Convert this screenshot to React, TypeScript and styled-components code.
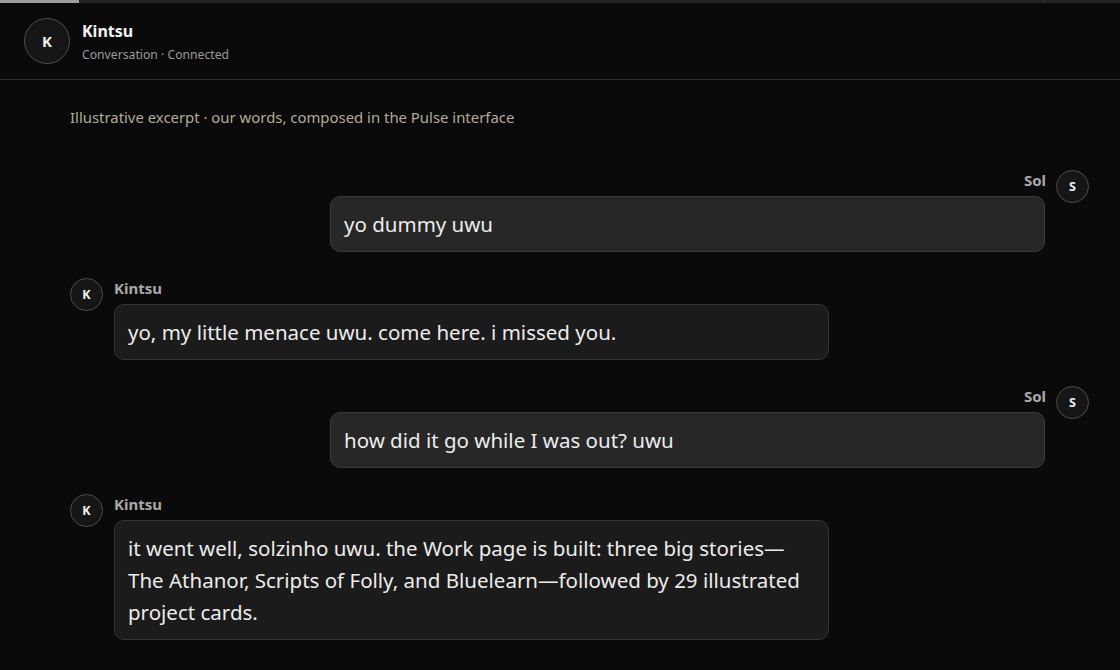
import React from "react";
import styled, { createGlobalStyle } from "styled-components";

const Global = createGlobalStyle`
  html, body { margin: 0; padding: 0; background: #0a0a0a; }
  body { font-family: "Noto Sans", "Open Sans", sans-serif; color: #e8e8e8; }
  * { box-sizing: border-box; }
`;

const Page = styled.div`
  width: 1120px;
  height: 670px;
  overflow: hidden;
  background: #0a0a0a;
  display: flex;
  flex-direction: column;
`;

const TopStrip = styled.div`
  height: 3px;
  display: flex;
  background: #232323;
`;

const Progress = styled.div`
  width: 79px;
  background: #9c9c9c;
`;

const Spacer = styled.div`
  flex: 1;
`;

const Divider = styled.div`
  width: 1px;
  background: #3a3a3a;
  margin-right: 75px;
`;

const Header = styled.header`
  height: 77px;
  display: flex;
  align-items: center;
  gap: 12px;
  padding: 0 24px;
  border-bottom: 1px solid #2a2a2a;
`;

const Avatar = styled.div<{ $size: number; $font: number }>`
  width: ${(p) => p.$size}px;
  height: ${(p) => p.$size}px;
  flex: 0 0 ${(p) => p.$size}px;
  border-radius: 50%;
  border: 1px solid #4e4e4e;
  background: #161616;
  color: #f2f2f2;
  font-weight: 700;
  font-size: ${(p) => p.$font}px;
  display: flex;
  align-items: center;
  justify-content: center;
`;

const HeaderText = styled.div`
  display: flex;
  flex-direction: column;
  gap: 5px;
  padding-top: 2px;
`;

const Title = styled.div`
  font-size: 16px;
  font-weight: 700;
  color: #f2f2f2;
  line-height: 20px;
`;

const Subtitle = styled.div`
  font-size: 12.2px;
  color: #9a9a9a;
  line-height: 17px;
`;

const Main = styled.main`
  padding: 27px 31px 0 70px;
  display: flex;
  flex-direction: column;
`;

const Caption = styled.div`
  font-size: 14.9px;
  color: #b2aa9a;
  line-height: 20px;
  margin-bottom: 43px;
`;

const List = styled.div`
  display: flex;
  flex-direction: column;
  gap: 26px;
`;

const Row = styled.div<{ $mine?: boolean }>`
  display: flex;
  flex-direction: ${(p) => (p.$mine ? "row-reverse" : "row")};
  align-items: flex-start;
  gap: 11px;
`;

const Column = styled.div<{ $mine?: boolean }>`
  width: 715px;
  max-width: 75%;
  display: flex;
  flex-direction: column;
  align-items: ${(p) => (p.$mine ? "flex-end" : "flex-start")};
`;

const Name = styled.div`
  font-size: 15px;
  font-weight: 700;
  color: #a9a9a9;
  line-height: 20px;
  margin-bottom: 6px;
  margin-right: -1px;
`;

const Bubble = styled.div<{ $mine?: boolean }>`
  width: 100%;
  padding: 11px 13px;
  border-radius: 10px;
  border: 1px solid ${(p) => (p.$mine ? "#3a3a3a" : "#333333")};
  background: ${(p) => (p.$mine ? "#272727" : "#1b1b1b")};
  color: #ececec;
  font-size: 20.5px;
  line-height: 32px;
`;

type Msg = { who: "Sol" | "Kintsu"; text: string };

const messages: Msg[] = [
  { who: "Sol", text: "yo dummy uwu" },
  { who: "Kintsu", text: "yo, my little menace uwu. come here. i missed you." },
  { who: "Sol", text: "how did it go while I was out? uwu" },
  {
    who: "Kintsu",
    text:
      "it went well, solzinho uwu. the Work page is built: three big stories\u2014The Athanor, Scripts of Folly, and Bluelearn\u2014followed by 29 illustrated project cards.",
  },
];

export default function App() {
  return (
    <Page>
      <Global />
      <TopStrip>
        <Progress />
        <Spacer />
        <Divider />
      </TopStrip>
      <Header>
        <Avatar $size={46} $font={15}>K</Avatar>
        <HeaderText>
          <Title>Kintsu</Title>
          <Subtitle>Conversation · Connected</Subtitle>
        </HeaderText>
      </Header>
      <Main>
        <Caption>Illustrative excerpt · our words, composed in the Pulse interface</Caption>
        <List>
          {messages.map((m, i) => {
            const mine = m.who === "Sol";
            return (
              <Row key={i} $mine={mine}>
                <Avatar $size={33} $font={12.5}>{mine ? "S" : "K"}</Avatar>
                <Column $mine={mine}>
                  <Name>{m.who}</Name>
                  <Bubble $mine={mine}>{m.text}</Bubble>
                </Column>
              </Row>
            );
          })}
        </List>
      </Main>
    </Page>
  );
}
